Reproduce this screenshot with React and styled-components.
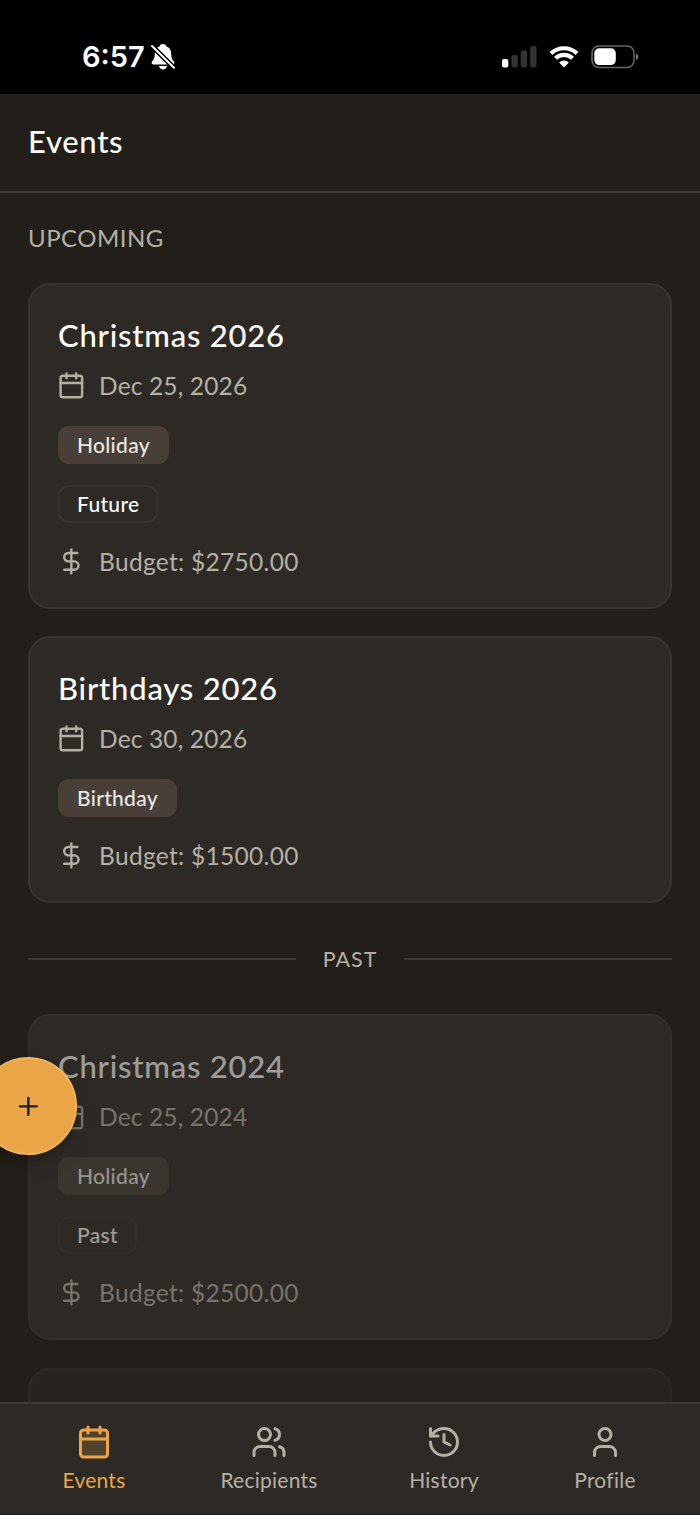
import React from 'react'
import styled, { createGlobalStyle } from 'styled-components'
import { Calendar, DollarSign, History, Plus, User, Users } from 'lucide-react'

const colors = {
  page: '#221f1a',
  card: '#2d2a25',
  cardBorder: '#373430',
  pastBorder: '#33302b',
  line: '#3c3833',
  text: '#fafafa',
  muted: '#b5b0a6',
  badge: '#483f38',
  badgeText: '#ece8e3',
  accent: '#eaa646'
}

const GlobalStyle = createGlobalStyle`
  * { box-sizing: border-box; }

  body {
    margin: 0;
    background: ${colors.page};
  }
`

const Screen = styled.div`
  display: flex;
  flex-direction: column;
  height: 1515px;
  overflow: hidden;
  position: relative;
  background: ${colors.page};
  color: ${colors.text};
  font-family: Lato, 'Noto Sans', sans-serif;
`

const StatusBar = styled.div`
  flex: none;
  display: flex;
  justify-content: space-between;
  align-items: center;
  height: 94px;
  padding: 19px 61px 0 82px;
  background: #000;
`

const StatusGroup = styled.div`
  display: flex;
  align-items: center;
  gap: ${props => props.$gap}px;
`

const Clock = styled.span`
  font: 600 29px/34px Inter, sans-serif;
`

const Header = styled.header`
  flex: none;
  display: flex;
  align-items: center;
  height: 99px;
  padding: 0 28px 3px;
  border-bottom: 2px solid ${colors.line};
`

const Heading = styled.h1`
  margin: 0;
  font-size: 31px;
  font-weight: 500;
  letter-spacing: .7px;
`

const Content = styled.main`
  flex: 1;
  min-height: 0;
  overflow: hidden;
  padding: 27px 28px 0;
`

const SectionLabel = styled.h2`
  margin: 0 0 28px;
  font-size: 24px;
  font-weight: 400;
  line-height: 35px;
  letter-spacing: .5px;
  color: ${colors.muted};
`

const Card = styled.article`
  margin-bottom: 27.8px;
  padding: 28px 28px 29.7px;
  background: ${colors.card};
  border: 2px solid ${props => props.$past ? colors.pastBorder : colors.cardBorder};
  border-radius: 22px;
  opacity: ${props => props.$opacity || 1};
`

const CardBody = styled.div`
  opacity: ${props => props.$dim ? .55 : 1};
`

const Title = styled.h3`
  margin: 0 0 12px;
  font-size: 31px;
  font-weight: 500;
  line-height: 44px;
  letter-spacing: .78px;
`

const InfoRow = styled.div`
  display: flex;
  align-items: center;
  gap: 13px;
  height: 32px;
  font-size: 24.5px;
  letter-spacing: ${props => props.$spacing}px;
  white-space: nowrap;
  color: ${colors.muted};

  svg {
    margin-left: -.6px;
  }
`

const Badges = styled.div`
  display: flex;
  flex-direction: column;
  align-items: flex-start;
  gap: 21px;
  margin: 25px 0 22px;
`

const Badge = styled.span`
  height: 38px;
  padding: 0 17px;
  border: 2px solid ${props => props.$outline ? colors.cardBorder : colors.badge};
  border-radius: 11px;
  background: ${props => props.$outline ? 'transparent' : colors.badge};
  color: ${props => props.$outline ? colors.text : colors.badgeText};
  font-size: 21px;
  font-weight: 500;
  line-height: 33px;
  letter-spacing: .3px;
`

const Divider = styled.div`
  display: flex;
  align-items: center;
  gap: 27px;
  height: 32px;
  margin: 39.5px 0 39.6px;
  font-size: 21.5px;
  letter-spacing: 1px;
  color: ${colors.muted};

  &::before,
  &::after {
    content: '';
    flex: 1;
    height: 2px;
    background: ${colors.line};
  }
`

const NavBar = styled.nav`
  flex: none;
  display: flex;
  justify-content: center;
  gap: 95px;
  height: 113px;
  padding: 20px 0 0 2px;
  background: ${colors.card};
  border-top: 2px solid ${colors.line};
  border-bottom: 1px solid ${colors.page};
`

const NavItem = styled.a`
  display: flex;
  flex-direction: column;
  align-items: center;
  gap: 6px;
  width: ${props => props.$width}px;
  font-size: 21px;
  line-height: 28px;
  letter-spacing: .25px;
  white-space: nowrap;
  color: ${props => props.$active ? colors.accent : colors.muted};
`

const AddButton = styled.button`
  position: absolute;
  left: -21px;
  top: 1057px;
  display: flex;
  align-items: center;
  justify-content: center;
  width: 98px;
  height: 98px;
  padding: 0;
  border: 2px solid #f0b35e;
  border-radius: 50%;
  background: ${colors.accent};
  color: ${colors.page};
  box-shadow: 0 12px 20px rgba(0, 0, 0, .12), 0 4px 8px rgba(0, 0, 0, .1);
`

const upcoming = [
  { title: 'Christmas 2026', date: 'Dec 25, 2026', type: 'Holiday', status: 'Future', budget: '$2750.00' },
  { title: 'Birthdays 2026', date: 'Dec 30, 2026', type: 'Birthday', budget: '$1500.00' }
]

const past = [
  { title: 'Christmas 2024', date: 'Dec 25, 2024', type: 'Holiday', status: 'Past', budget: '$2500.00' }
]

const tabs = [
  { label: 'Events', icon: Calendar, width: 63, active: true },
  { label: 'Recipients', icon: Users, width: 97 },
  { label: 'History', icon: History, width: 63 },
  { label: 'Profile', icon: User, width: 69 }
]

function BellOff() {
  return (
    <svg width="26" height="28" viewBox="0 0 26 28">
      <path d="M13 1c1.800 0 3 .9 3.300 2.200 3.300 1.200 4.900 4 4.900 7.400 0 4.700 1.200 6.300 2.700 8 .9 1 .5 2.800-1.100 2.800H3.200c-1.600 0-2-1.800-1.100-2.800 1.500-1.700 2.700-3.300 2.700-8 0-3.400 1.600-6.200 4.900-7.400C10 1.900 11.200 1 13 1z" fill="#fff" />
      <path d="M9 23h8c-.3 2-1.900 3.400-4 3.400S9.300 25 9 23z" fill="#fff" />
      <path d="M1.500 2.500l23 22.800" stroke="#000" strokeWidth="5" />
      <path d="M2 3l22 21.800" stroke="#fff" strokeWidth="2" strokeLinecap="round" />
    </svg>
  )
}

function Signal() {
  return (
    <svg width="35" height="22" viewBox="0 0 35 22">
      <rect x="0" y="13" width="6.300" height="8.500" rx="2" fill="#fff" />
      <rect x="9.500" y="9" width="6.300" height="12.500" rx="2" fill="#333" />
      <rect x="18.800" y="4.500" width="6.300" height="17" rx="2" fill="#333" />
      <rect x="28.200" y="0" width="6.300" height="21.500" rx="2" fill="#333" />
    </svg>
  )
}

function Wifi() {
  return (
    <svg width="30" height="22" viewBox="0 0 30 22" fill="none" stroke="#fff" strokeWidth="4.200">
      <path d="M2 7.400a19 19 0 0 1 26 0" />
      <path d="M6.500 12.200a12.500 12.500 0 0 1 17 0" />
      <path d="M15 21.500l-4.900-5a7 7 0 0 1 9.800 0z" fill="#fff" stroke="none" />
    </svg>
  )
}

function Battery() {
  return (
    <svg width="48" height="24" viewBox="0 0 48 24">
      <rect x="1" y="1" width="42" height="21.500" rx="7" fill="none" stroke="#666" strokeWidth="1.600" />
      <rect x="3.300" y="3.300" width="21.500" height="16.800" rx="5" fill="#fff" />
      <path d="M45 8.500c1.700.6 2.300 1.800 2.300 3.200S46.700 14.400 45 15z" fill="#777" />
    </svg>
  )
}

function EventCard({ event, isPast }) {
  return (
    <Card $past={isPast}>
      <CardBody $dim={isPast}>
        <Title>{event.title}</Title>
        <InfoRow $spacing={.14}><Calendar size={28.7} />{event.date}</InfoRow>
        <Badges>
          <Badge>{event.type}</Badge>
          {event.status && <Badge $outline>{event.status}</Badge>}
        </Badges>
        <InfoRow $spacing={.3}><DollarSign size={28.7} />Budget: {event.budget}</InfoRow>
      </CardBody>
    </Card>
  )
}

export default function App() {
  return (
    <Screen>
      <GlobalStyle />
      <StatusBar>
        <StatusGroup $gap={5}>
          <Clock>6:57</Clock>
          <BellOff />
        </StatusGroup>
        <StatusGroup $gap={12}>
          <Signal />
          <Wifi />
          <Battery />
        </StatusGroup>
      </StatusBar>

      <Header>
        <Heading>Events</Heading>
      </Header>

      <Content>
        <SectionLabel>UPCOMING</SectionLabel>
        {upcoming.map(event => <EventCard key={event.title} event={event} />)}
        <Divider>PAST</Divider>
        {past.map(event => <EventCard key={event.title} event={event} isPast />)}
        <Card $opacity={.5} />
      </Content>

      <NavBar>
        {tabs.map(({ label, icon: Icon, width, active }) =>
          <NavItem key={label} $width={width} $active={active}>
            <Icon size={36} fill={active ? 'rgba(234, 166, 70, .2)' : 'none'} />
            {label}
          </NavItem>
        )}
      </NavBar>

      <AddButton><Plus size={28.7} /></AddButton>
    </Screen>
  )
}
